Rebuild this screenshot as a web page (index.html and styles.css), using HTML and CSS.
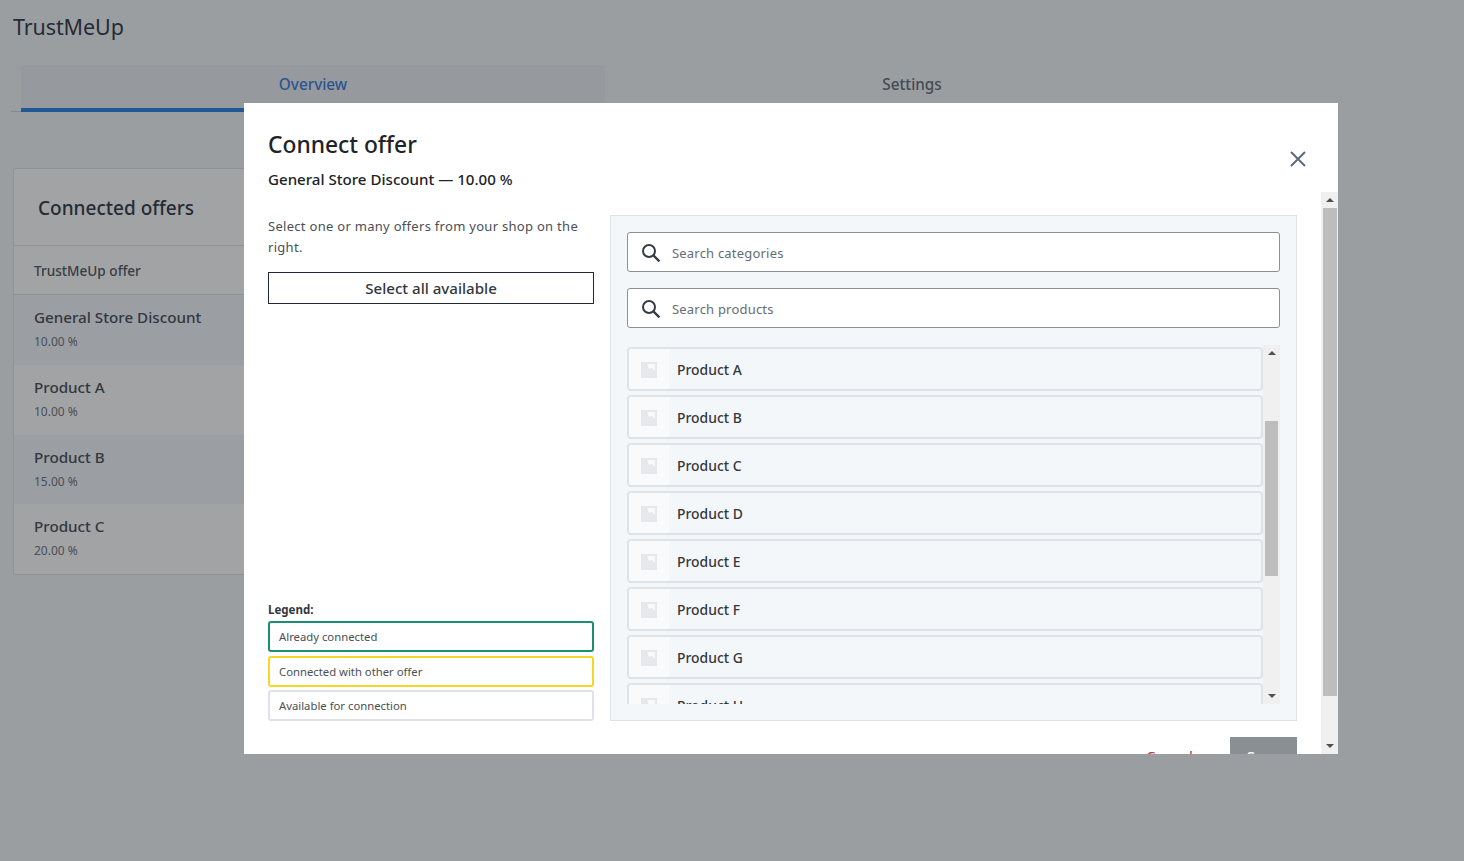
FILE: index.html
```html
<!DOCTYPE html>
<html lang="en">
<head>
<meta charset="utf-8">
<title>TrustMeUp</title>
<link rel="stylesheet" href="styles.css">
</head>
<body>
<div class="page">
  <h1 class="app-title">TrustMeUp</h1>
  <nav class="tabs">
    <div class="tab tab-active">Overview</div>
    <div class="tab">Settings</div>
  </nav>
  <section class="card">
    <h2 class="card-title">Connected offers</h2>
    <div class="table-head">TrustMeUp offer</div>
    <div class="row row-shade"><div class="row-name">General Store Discount</div><div class="row-value">10.00 %</div></div>
    <div class="row"><div class="row-name">Product A</div><div class="row-value">10.00 %</div></div>
    <div class="row row-shade"><div class="row-name">Product B</div><div class="row-value">15.00 %</div></div>
    <div class="row"><div class="row-name">Product C</div><div class="row-value">20.00 %</div></div>
  </section>
</div>

<div class="backdrop"></div>

<div class="modal">
  <header class="modal-head">
    <div>
      <h2 class="modal-title">Connect offer</h2>
      <p class="modal-sub">General Store Discount — 10.00 %</p>
    </div>
    <button class="close" aria-label="Close">
      <svg width="16" height="16" viewBox="0 0 16 16"><path d="M1 1l14 14M15 1L1 15" stroke="#5c6b7a" stroke-width="2" fill="none"/></svg>
    </button>
  </header>
  <div class="modal-body">
    <div class="columns">
      <aside class="left">
        <div>
          <p class="hint">Select one or many offers from your shop on the right.</p>
          <button class="select-all">Select all available</button>
        </div>
        <div class="legend">
          <div class="legend-title">Legend:</div>
          <div class="legend-item legend-green">Already connected</div>
          <div class="legend-item legend-yellow">Connected with other offer</div>
          <div class="legend-item legend-grey">Available for connection</div>
        </div>
      </aside>
      <div class="panel">
        <label class="search">
          <svg class="search-icon" width="20" height="20" viewBox="0 0 20 20"><circle cx="8" cy="8" r="6" stroke="#333c45" stroke-width="2" fill="none"/><path d="M12.4 12.4l6 6" stroke="#333c45" stroke-width="2.2" fill="none"/></svg>
          <span class="placeholder">Search categories</span>
        </label>
        <label class="search">
          <svg class="search-icon" width="20" height="20" viewBox="0 0 20 20"><circle cx="8" cy="8" r="6" stroke="#333c45" stroke-width="2" fill="none"/><path d="M12.4 12.4l6 6" stroke="#333c45" stroke-width="2.2" fill="none"/></svg>
          <span class="placeholder">Search products</span>
        </label>
        <div class="list-wrap">
          <ul class="list">
            <li class="item"><span class="thumb"><svg class="pic" width="16" height="16" viewBox="0 0 16 16"><path d="M0 0h16v16H0z" fill="#e6e8eb"/><path d="M6 2h8v7L11 6 8 7z" fill="#f8f9fb"/></svg></span><span class="item-name">Product A</span></li>
            <li class="item"><span class="thumb"><svg class="pic" width="16" height="16" viewBox="0 0 16 16"><path d="M0 0h16v16H0z" fill="#e6e8eb"/><path d="M6 2h8v7L11 6 8 7z" fill="#f8f9fb"/></svg></span><span class="item-name">Product B</span></li>
            <li class="item"><span class="thumb"><svg class="pic" width="16" height="16" viewBox="0 0 16 16"><path d="M0 0h16v16H0z" fill="#e6e8eb"/><path d="M6 2h8v7L11 6 8 7z" fill="#f8f9fb"/></svg></span><span class="item-name">Product C</span></li>
            <li class="item"><span class="thumb"><svg class="pic" width="16" height="16" viewBox="0 0 16 16"><path d="M0 0h16v16H0z" fill="#e6e8eb"/><path d="M6 2h8v7L11 6 8 7z" fill="#f8f9fb"/></svg></span><span class="item-name">Product D</span></li>
            <li class="item"><span class="thumb"><svg class="pic" width="16" height="16" viewBox="0 0 16 16"><path d="M0 0h16v16H0z" fill="#e6e8eb"/><path d="M6 2h8v7L11 6 8 7z" fill="#f8f9fb"/></svg></span><span class="item-name">Product E</span></li>
            <li class="item"><span class="thumb"><svg class="pic" width="16" height="16" viewBox="0 0 16 16"><path d="M0 0h16v16H0z" fill="#e6e8eb"/><path d="M6 2h8v7L11 6 8 7z" fill="#f8f9fb"/></svg></span><span class="item-name">Product F</span></li>
            <li class="item"><span class="thumb"><svg class="pic" width="16" height="16" viewBox="0 0 16 16"><path d="M0 0h16v16H0z" fill="#e6e8eb"/><path d="M6 2h8v7L11 6 8 7z" fill="#f8f9fb"/></svg></span><span class="item-name">Product G</span></li>
            <li class="item"><span class="thumb"><svg class="pic" width="16" height="16" viewBox="0 0 16 16"><path d="M0 0h16v16H0z" fill="#e6e8eb"/><path d="M6 2h8v7L11 6 8 7z" fill="#f8f9fb"/></svg></span><span class="item-name">Product H</span></li>
          </ul>
          <div class="scrollbar list-scroll">
            <span class="arrow arrow-up"></span>
            <span class="thumb-bar list-thumb"></span>
            <span class="arrow arrow-down"></span>
          </div>
        </div>
      </div>
    </div>
    <footer class="actions">
      <button class="cancel">Cancel</button>
      <button class="save">Save</button>
    </footer>
    <div class="scrollbar body-scroll">
      <span class="arrow arrow-up"></span>
      <span class="thumb-bar body-thumb"></span>
      <span class="arrow arrow-down"></span>
    </div>
  </div>
</div>
</body>
</html>
```
FILE: styles.css
```css
* { box-sizing: border-box; }
html, body { margin: 0; height: 100%; overflow: hidden; }
body {
  background: #f4f6f8;
  color: #212b36;
  font-family: "Noto Sans", "Open Sans", sans-serif;
}
.page { padding: 0 0 0 13px; }
.app-title {
  margin: 0;
  padding-top: 11px;
  height: 65px;
  font-size: 21.5px;
  line-height: 32px;
  font-weight: 400;
  letter-spacing: -0.1px;
}
.tabs {
  display: flex;
  width: 1208px;
  margin-left: -2px;
  padding-left: 10px;
  height: 47px;
  border-bottom: 1px solid #c4cdd5;
}
.tab {
  flex: none;
  width: 584px;
  height: 47px;
  padding-top: 8px;
  text-align: center;
  font-size: 15.3px;
  line-height: 22px;
  font-weight: 500;
  color: #59636e;
}
.tab + .tab { width: 614px; }
.tab-active {
  background: #ebeef3;
  color: #2f74d8;
  border-bottom: 4px solid #1f7ae6;
}
.card {
  width: 1100px;
  margin-top: 56px;
  background: #fff;
  border: 1px solid #dfe3e8;
  border-radius: 2px;
}
.card-title {
  margin: 0;
  height: 77px;
  padding: 24px 0 0 24px;
  font-size: 19px;
  line-height: 30px;
  font-weight: 500;
  border-bottom: 1px solid #dfe3e8;
}
.table-head {
  height: 49px;
  padding: 15px 0 0 20px;
  font-size: 13.6px;
  line-height: 20px;
  font-weight: 500;
  color: #454b52;
  border-bottom: 1px solid #dfe3e8;
}
.row { height: 69.75px; padding: 11px 0 0 20px; }
.row-shade { background: #f4f6fa; }
.row-name { font-size: 15.2px; line-height: 22px; font-weight: 500; color: #3a4048; }
.row-value { margin-top: 5px; font-size: 12px; line-height: 18px; color: #666c73; }

.backdrop {
  position: fixed;
  inset: 0;
  background: rgba(40, 46, 50, 0.44);
}
.modal {
  position: fixed;
  left: 244px;
  top: 103px;
  width: 1094px;
  height: 651px;
  background: #fff;
  overflow: hidden;
}
.modal-head {
  display: flex;
  justify-content: space-between;
  height: 89px;
  padding: 24px 32px 0 24px;
}
.modal-title {
  margin: 0;
  font-size: 22.8px;
  line-height: 35px;
  font-weight: 500;
  color: #202327;
}
.modal-sub {
  margin: 7px 0 0;
  font-size: 15.1px;
  line-height: 20px;
  font-weight: 500;
  color: #202327;
}
.close {
  width: 16px;
  height: 16px;
  margin-top: 24px;
  padding: 0;
  border: 0;
  background: none;
  display: block;
}
.close svg { display: block; }
.modal-body {
  position: relative;
  padding: 23px 41px 0 24px;
  height: 562px;
}
.columns { display: flex; gap: 16px; height: 506px; }
.left {
  width: 326px;
  display: flex;
  flex-direction: column;
  justify-content: space-between;
}
.hint {
  margin: 1px 0 0;
  font-size: 13px;
  line-height: 21px;
  letter-spacing: 0.29px;
  color: #4a4f55;
}
.select-all {
  display: block;
  width: 100%;
  height: 32px;
  margin-top: 14px;
  padding: 0;
  background: #fff;
  border: 1px solid #212b36;
  font-family: inherit;
  font-size: 15.1px;
  font-weight: 500;
  color: #33373d;
}
.legend-title { font-size: 11.5px; line-height: 16px; font-weight: 700; color: #33373d; margin-bottom: 3px; }
.legend-item {
  height: 31px;
  padding-left: 9px;
  border: 2px solid #dfe3e8;
  border-radius: 3px;
  font-size: 11.3px;
  line-height: 27px;
  color: #4a4f55;
}
.legend-item + .legend-item { margin-top: 4px; }
.legend-item:last-child { margin-top: 3px; }
.legend-green { border-color: #1a9070; }
.legend-yellow { border-color: #f5d827; }
.legend-grey { border-color: #dfe3e8; }

.panel {
  width: 687px;
  background: #f4f7fa;
  border: 1px solid #dfe3e8;
  padding: 16px 16px 0;
}
.search {
  display: flex;
  align-items: center;
  height: 40px;
  margin-bottom: 16px;
  padding-left: 13px;
  background: #fff;
  border: 1px solid #8c9196;
  border-radius: 3px;
}
.search-icon { margin: 2px 11px 0 0; flex: none; }
.placeholder { font-size: 13px; line-height: 20px; padding-top: 1px; color: #666c73; letter-spacing: 0.2px; }
.list-wrap {
  position: relative;
  height: 359px;
  margin-top: 17px;
  overflow: hidden;
}
.list { list-style: none; margin: 0; padding: 2px 17px 0 0; }
.item {
  display: flex;
  align-items: center;
  height: 44px;
  margin-bottom: 4px;
  border: 2px solid #dfe3e8;
  border-radius: 4px;
  overflow: hidden;
}
.thumb {
  display: flex;
  align-items: center;
  justify-content: center;
  width: 40px;
  height: 100%;
  background: #f9fafb;
  flex: none;
}
.pic { display: block; margin-left: 0; margin-top: 1px; }
.item-name {
  margin-left: 8px;
  font-size: 13.9px;
  font-weight: 500;
  color: #33373d;
}
.scrollbar {
  position: absolute;
  right: 0;
  width: 17px;
  background: #f0f0f0;
}
.list-scroll { top: 0; bottom: 0; }
.body-scroll { top: 0; bottom: 0; }
.thumb-bar { position: absolute; left: 2px; right: 2px; background: #bdbdbd; }
.list-thumb { top: 76px; height: 155px; }
.body-thumb { top: 16px; height: 488px; left: 2px; right: 1px; }
.arrow {
  position: absolute;
  left: 5px;
  width: 0;
  height: 0;
  border-left: 4px solid transparent;
  border-right: 4px solid transparent;
}
.arrow-up { top: 6px; border-bottom: 4px solid #505050; }
.arrow-down { bottom: 6px; border-top: 4px solid #505050; }
.actions {
  display: flex;
  justify-content: flex-end;
  align-items: flex-start;
  gap: 37px;
  margin-top: 16px;
}
.cancel {
  height: 38px;
  padding: 0;
  border: 0;
  background: none;
  font-family: inherit;
  font-size: 15.1px;
  line-height: 20px;
  color: #c0303a;
}
.save {
  width: 67px;
  height: 40px;
  padding: 0 0 2px;
  border: 0;
  background: #8a8f94;
  color: #fff;
  font-family: inherit;
  font-size: 15.1px;
  line-height: 20px;
  font-weight: 500;
}
```
